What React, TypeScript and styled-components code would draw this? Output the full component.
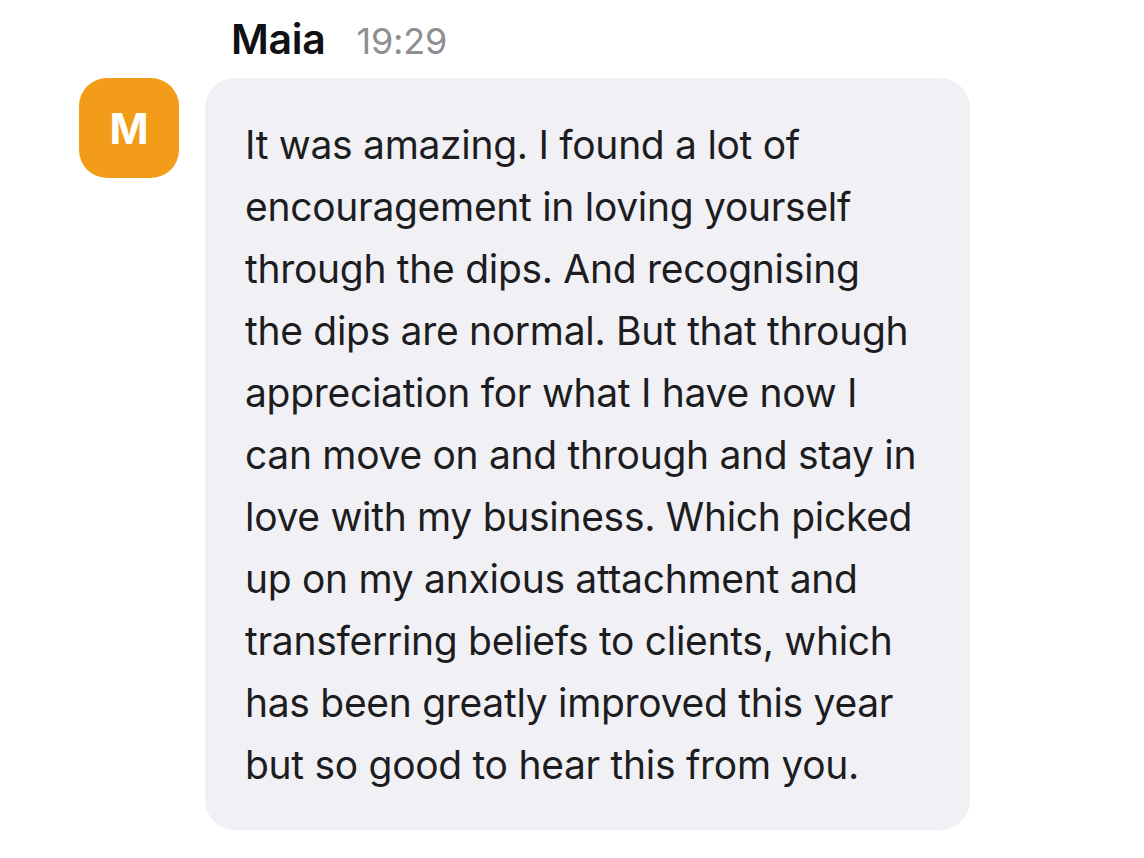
import React from "react";
import styled, { createGlobalStyle } from "styled-components";

const GlobalStyle = createGlobalStyle`
  html, body {
    margin: 0;
    padding: 0;
    background: #ffffff;
    font-family: Inter, "Noto Sans", sans-serif;
    -webkit-font-smoothing: antialiased;
  }
`;

const Page = styled.div`
  padding: 14px 0 0 79px;
`;

const Message = styled.div`
  display: grid;
  grid-template-columns: 100px auto;
  column-gap: 26px;
  row-gap: 12px;
  align-items: start;
`;

const Header = styled.div`
  grid-column: 2;
  display: flex;
  align-items: baseline;
  gap: 31px;
  padding-left: 26px;
  height: 52px;
`;

const Name = styled.span`
  font-size: 41px;
  font-weight: 600;
  color: #111113;
  letter-spacing: -0.3px;
`;

const Time = styled.span`
  font-size: 36px;
  color: #8e8e93;
  letter-spacing: -0.2px;
`;

const Avatar = styled.div`
  width: 100px;
  height: 100px;
  border-radius: 28px;
  background: #f39c19;
  color: #ffffff;
  display: flex;
  align-items: center;
  justify-content: center;
  font-size: 42px;
  font-weight: 700;
`;

const Bubble = styled.div`
  width: 765px;
  box-sizing: border-box;
  padding: 36px 40px 34px 40px;
  background: #f1f1f5;
  border-radius: 30px;
  font-size: 39px;
  line-height: 62px;
  color: #1d1d1f;
  letter-spacing: -0.3px;
`;

const Line = styled.span`
  display: block;
  white-space: nowrap;
`;

const lines = [
  "It was amazing. I found a lot of",
  "encouragement in loving yourself",
  "through the dips. And recognising",
  "the dips are normal. But that through",
  "appreciation for what I have now I",
  "can move on and through and stay in",
  "love with my business. Which picked",
  "up on my anxious attachment and",
  "transferring beliefs to clients, which",
  "has been greatly improved this year",
  "but so good to hear this from you.",
];

export default function App() {
  return (
    <Page>
      <GlobalStyle />
      <Message>
        <Header>
          <Name>Maia</Name>
          <Time>19:29</Time>
        </Header>
        <Avatar>M</Avatar>
        <Bubble>
          {lines.map((l) => (
            <Line key={l}>{l}</Line>
          ))}
        </Bubble>
      </Message>
    </Page>
  );
}
